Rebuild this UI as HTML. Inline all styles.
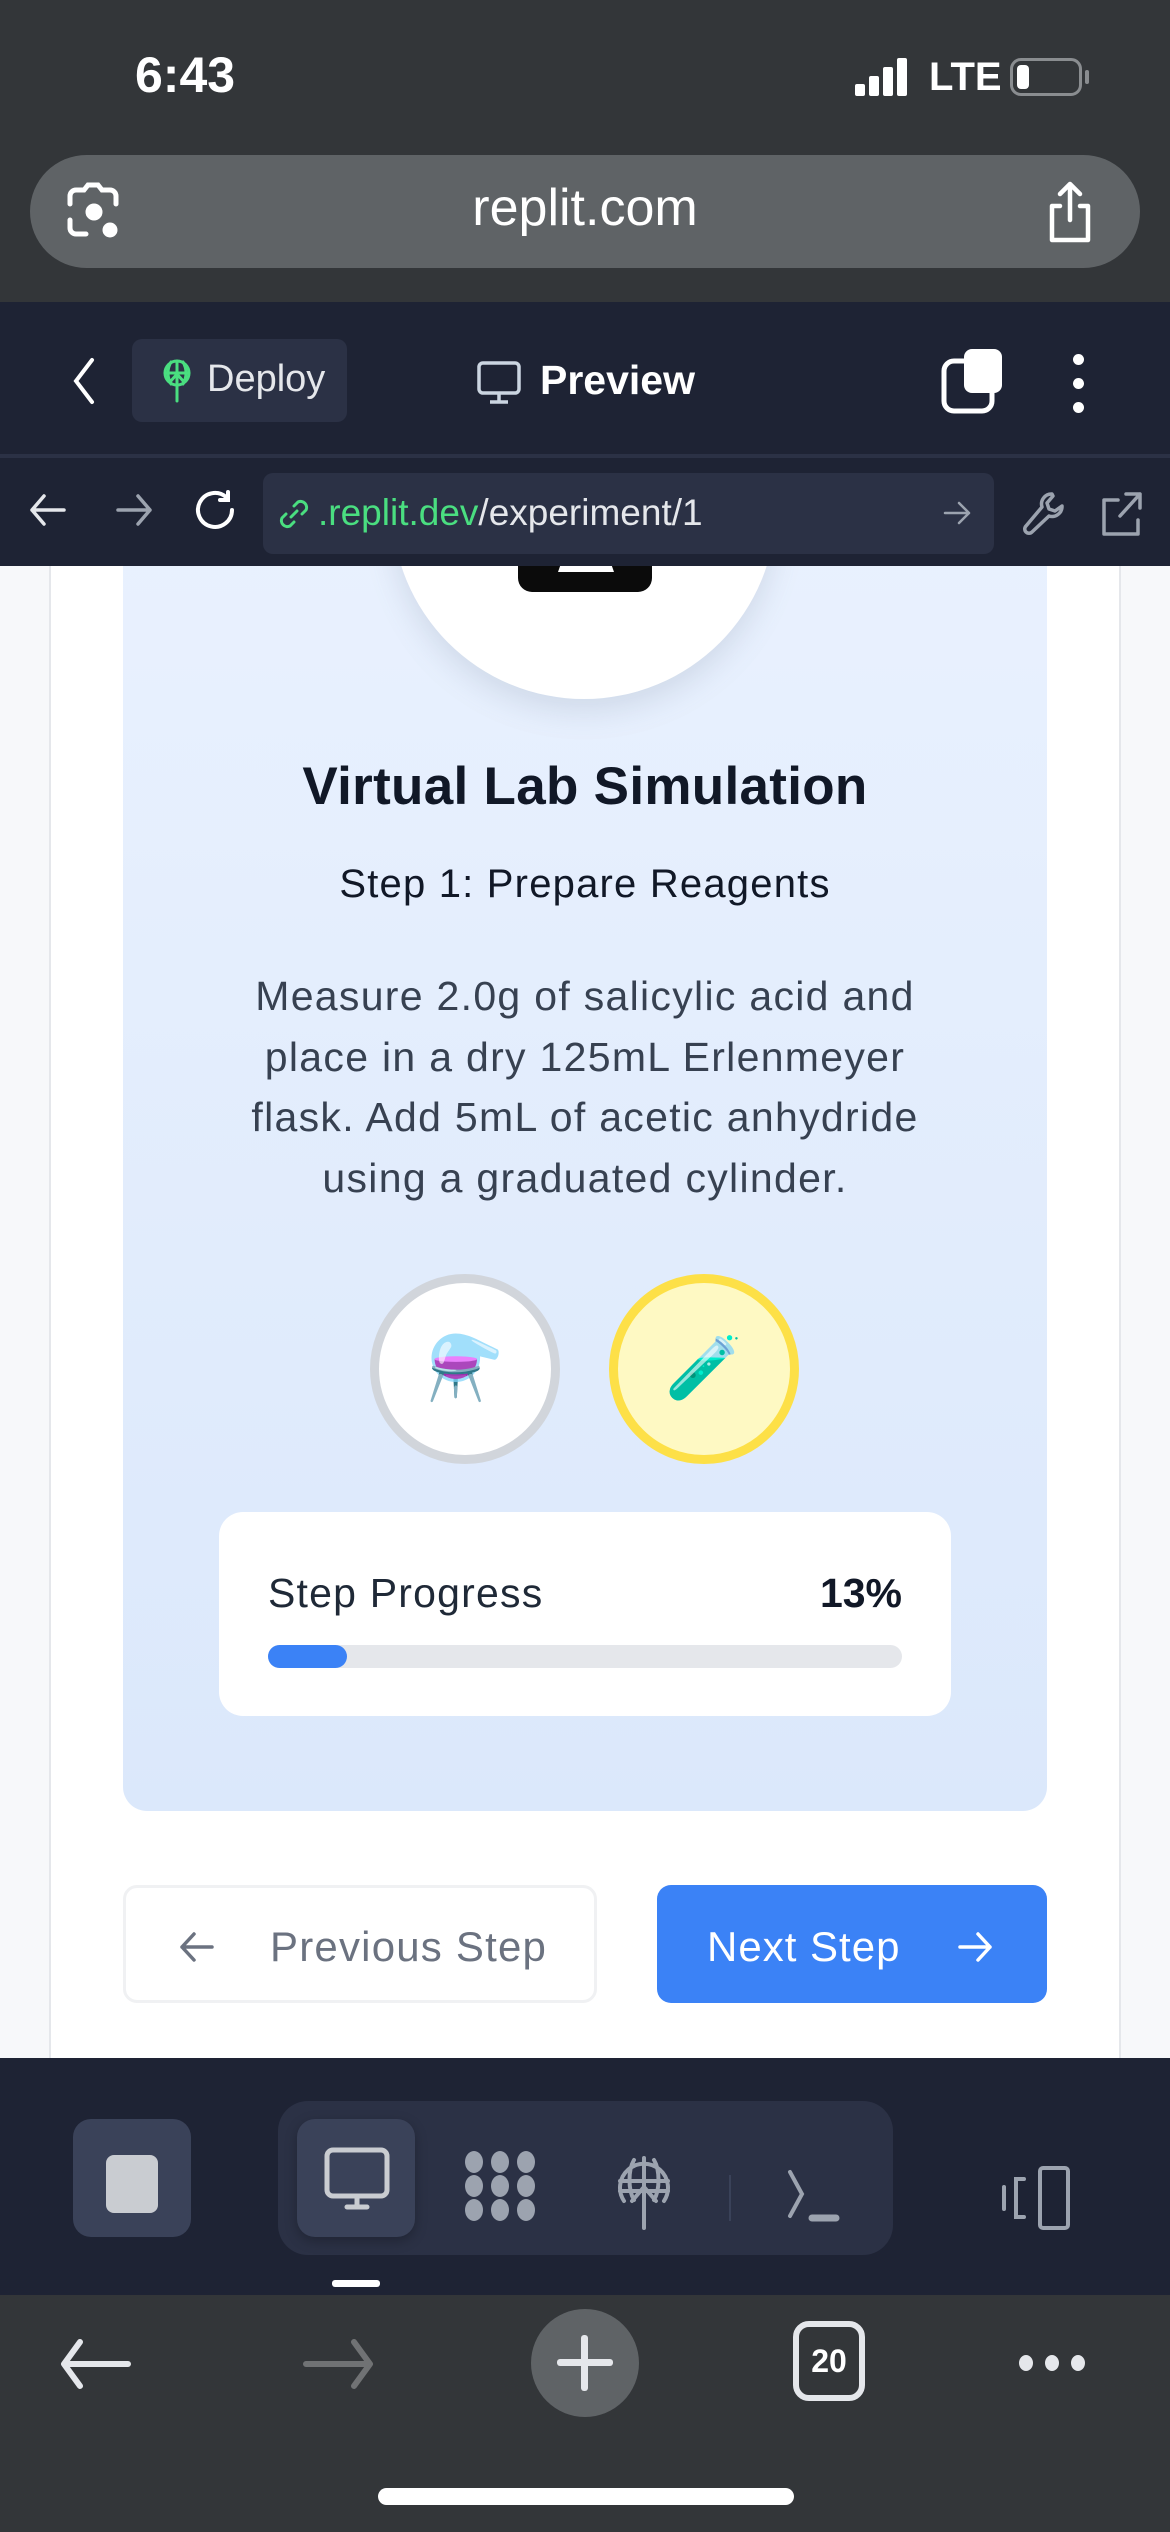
<!DOCTYPE html>
<html><head><meta charset="utf-8"><style>
*{margin:0;padding:0;box-sizing:border-box}
body{width:1170px;height:2532px;position:relative;overflow:hidden;font-family:"Liberation Sans",sans-serif;background:#f7f8fa}
.a{position:absolute}
.c{text-align:center;white-space:nowrap}
</style></head><body>
<div class="a" style="left:0;top:0;width:1170px;height:302px;background:#333639"></div>
<div class="a" style="left:135px;top:46px;font-size:50px;font-weight:bold;color:#fff">6:43</div>
<div class="a" style="left:855px;top:58px;width:60px;height:38px">
 <div class="a" style="left:0;top:26px;width:10px;height:12px;background:#fff;border-radius:2px"></div>
 <div class="a" style="left:14px;top:18px;width:10px;height:20px;background:#fff;border-radius:2px"></div>
 <div class="a" style="left:28px;top:9px;width:10px;height:29px;background:#fff;border-radius:2px"></div>
 <div class="a" style="left:42px;top:0;width:10px;height:38px;background:#fff;border-radius:2px"></div>
</div>
<div class="a" style="left:929px;top:55px;font-size:40px;font-weight:bold;color:#fff">LTE</div>
<div class="a" style="left:1010px;top:58px;width:72px;height:38px;border:3px solid #8a8d90;border-radius:11px"><div class="a" style="left:4px;top:4px;width:12px;height:24px;background:#fff;border-radius:4px"></div></div>
<div class="a" style="left:1085px;top:70px;width:4px;height:14px;background:#8a8d90;border-radius:2px"></div>
<div class="a" style="left:30px;top:155px;width:1110px;height:113px;background:#5f6366;border-radius:57px"></div>
<svg class="a" style="left:64px;top:182px" width="60" height="60" viewBox="0 0 60 60" fill="none" stroke="#fff" stroke-width="5" stroke-linecap="round"><path d="M6 22V14a6 6 0 0 1 6-6h8l4-5h10l4 5h8a6 6 0 0 1 6 6v8M6 38v8a6 6 0 0 0 6 6h10"/><circle cx="30" cy="30" r="6" fill="#fff"/><circle cx="46" cy="48" r="5" fill="#fff"/></svg>
<div class="a c" style="left:0;width:1170px;top:178px;font-size:52px;color:#fff">replit.com</div>
<svg class="a" style="left:1040px;top:180px" width="60" height="64" viewBox="0 0 60 64" fill="none" stroke="#fff" stroke-width="4.5" stroke-linecap="round" stroke-linejoin="round"><path d="M30 4v36M20 14l10-10 10 10M20 26h-8v34h36V26h-8"/></svg>
<div class="a" style="left:0;top:302px;width:1170px;height:264px;background:#1e2334"></div>
<div class="a" style="left:0;top:454px;width:1170px;height:4px;background:#2b3145"></div>
<svg class="a" style="left:68px;top:356px" width="30" height="50" viewBox="0 0 30 50" fill="none" stroke="#fff" stroke-width="4" stroke-linecap="round"><path d="M24 4L8 25l16 21"/></svg>
<div class="a" style="left:132px;top:339px;width:215px;height:83px;background:#2b3145;border-radius:10px"></div>
<svg class="a" style="left:160px;top:358px" width="34" height="46" viewBox="0 0 34 46" fill="none" stroke="#4ade80" stroke-width="3" stroke-linecap="round"><circle cx="17" cy="15" r="12"/><path d="M5 15h24M17 3v40M11 4c-4 7-4 15 0 22M23 4c4 7 4 15 0 22M10 24l7-8 7 8"/></svg>
<div class="a" style="left:207px;top:358px;font-size:38px;color:#e5e7eb">Deploy</div>
<svg class="a" style="left:476px;top:360px" width="46" height="46" viewBox="0 0 46 46" fill="none" stroke="#cbd5e1" stroke-width="3.5" stroke-linejoin="round"><rect x="3" y="3" width="40" height="30" rx="4"/><path d="M23 33v9M14 42h18"/></svg>
<div class="a" style="left:540px;top:357px;font-size:41px;font-weight:bold;color:#fff">Preview</div>
<svg class="a" style="left:940px;top:347px" width="66" height="68" viewBox="0 0 66 68" fill="none"><rect x="4" y="14" width="48" height="50" rx="10" stroke="#fff" stroke-width="5"/><rect x="24" y="2" width="38" height="44" rx="8" fill="#fff"/></svg>
<div class="a" style="left:1073px;top:354px;width:11px;height:11px;border-radius:50%;background:#fff"></div>
<div class="a" style="left:1073px;top:378px;width:11px;height:11px;border-radius:50%;background:#fff"></div>
<div class="a" style="left:1073px;top:402px;width:11px;height:11px;border-radius:50%;background:#fff"></div>
<svg class="a" style="left:28px;top:492px" width="40" height="36" viewBox="0 0 40 36" fill="none" stroke="#e5e7eb" stroke-width="3.5" stroke-linecap="round" stroke-linejoin="round"><path d="M36 18H4M16 4L4 18l12 14"/></svg>
<svg class="a" style="left:114px;top:492px" width="40" height="36" viewBox="0 0 40 36" fill="none" stroke="#9ca3af" stroke-width="3.5" stroke-linecap="round" stroke-linejoin="round"><path d="M4 18h32M24 4l12 14-12 14"/></svg>
<svg class="a" style="left:194px;top:490px" width="46" height="44" viewBox="0 0 46 44" fill="none" stroke="#fff" stroke-width="4" stroke-linecap="round"><path d="M38 20a17 17 0 1 1-6-13M34 2v8h-8"/></svg>
<div class="a" style="left:263px;top:473px;width:731px;height:81px;background:#2b3145;border-radius:10px"></div>
<svg class="a" style="left:276px;top:496px" width="36" height="36" viewBox="0 0 36 36" fill="none" stroke="#4ade80" stroke-width="3" stroke-linecap="round"><path d="M15 21l6-6M18 10l4-4a6 6 0 0 1 8 8l-4 4M18 26l-4 4a6 6 0 0 1-8-8l4-4"/></svg>
<div class="a" style="left:318px;top:492px;font-size:37px;color:#e5e7eb;white-space:nowrap"><span style="color:#4ade80">.replit.dev</span>/experiment/1</div>
<svg class="a" style="left:942px;top:498px" width="30" height="30" viewBox="0 0 30 30" fill="none" stroke="#9ca3af" stroke-width="2.5" stroke-linecap="round" stroke-linejoin="round"><path d="M3 15h24M17 5l10 10-10 10"/></svg>
<svg class="a" style="left:1022px;top:490px" width="44" height="48" viewBox="0 0 44 48" fill="none" stroke="#9ca3af" stroke-width="3.5" stroke-linejoin="round"><path d="M30 4a10 10 0 0 0-10 13L4 36a4 4 0 0 0 6 6l17-16a10 10 0 0 0 13-10l-7 5-6-2-2-6 6-7z"/></svg>
<svg class="a" style="left:1100px;top:490px" width="44" height="48" viewBox="0 0 44 48" fill="none" stroke="#9ca3af" stroke-width="3.5" stroke-linecap="round" stroke-linejoin="round"><path d="M18 10H4v34h34V30M26 4h14v14M40 4L20 26"/></svg>
<div class="a" style="left:0;top:566px;width:1170px;height:1492px;background:#f7f8fa;overflow:hidden">
 <div class="a" style="left:49px;top:-20px;width:1072px;height:1540px;background:#fff;border:2px solid #e5e7eb;border-top:none"></div>
 <div class="a" style="left:123px;top:-40px;width:924px;height:1285px;background:linear-gradient(#e9f1fe,#dbe8fb);border-radius:24px"></div>
 <div class="a" style="left:392px;top:-251px;width:384px;height:384px;border-radius:50%;background:#fff;box-shadow:0 12px 30px rgba(100,116,139,.18)"></div>
 <div class="a" style="left:518px;top:-10px;width:134px;height:36px;background:#0b0b0b;border-radius:0 0 14px 14px"></div>
 <div class="a" style="left:558px;top:-10px;width:56px;height:16px;background:#fff;clip-path:polygon(10% 0,90% 0,100% 100%,0 100%)"></div>
 <div class="a c" style="left:0;width:1170px;top:190px;font-size:53px;font-weight:bold;color:#111827;letter-spacing:0.3px">Virtual Lab Simulation</div>
 <div class="a c" style="left:0;width:1170px;top:296px;font-size:40px;color:#111827;letter-spacing:1.2px">Step 1: Prepare Reagents</div>
 <div class="a c" style="left:0;width:1170px;top:400px;font-size:41px;line-height:60.5px;color:#374151;letter-spacing:1.3px">Measure 2.0g of salicylic acid and<br>place in a dry 125mL Erlenmeyer<br>flask. Add 5mL of acetic anhydride<br>using a graduated cylinder.</div>
 <div class="a" style="left:370px;top:708px;width:190px;height:190px;border-radius:50%;background:#fff;border:9px solid #d1d5db;font-size:62px;line-height:172px;text-align:center">⚗️</div>
 <div class="a" style="left:609px;top:708px;width:190px;height:190px;border-radius:50%;background:#fef9c3;border:9px solid #fde047;font-size:62px;line-height:172px;text-align:center">🧪</div>
 <div class="a" style="left:219px;top:946px;width:732px;height:204px;background:#fff;border-radius:24px"></div>
 <div class="a" style="left:268px;top:1004px;font-size:41px;color:#1f2937;letter-spacing:1.2px">Step Progress</div>
 <div class="a" style="left:780px;top:1004px;width:122px;text-align:right;font-size:41px;font-weight:bold;color:#111827">13%</div>
 <div class="a" style="left:268px;top:1079px;width:634px;height:23px;background:#e5e7eb;border-radius:12px"></div>
 <div class="a" style="left:268px;top:1079px;width:79px;height:23px;background:#3b82f6;border-radius:12px"></div>
 <div class="a" style="left:123px;top:1319px;width:474px;height:118px;background:#fff;border:3px solid #f0f1f3;border-radius:14px"></div>
 <svg class="a" style="left:178px;top:1363px" width="38" height="36" viewBox="0 0 38 36" fill="none" stroke="#6b7280" stroke-width="3.5" stroke-linecap="round" stroke-linejoin="round"><path d="M34 18H4M16 5L4 18l12 13"/></svg>
 <div class="a" style="left:270px;top:1357px;font-size:42px;color:#6b7280;letter-spacing:1.2px">Previous Step</div>
 <div class="a" style="left:657px;top:1319px;width:390px;height:118px;background:#3b82f6;border-radius:14px"></div>
 <div class="a" style="left:707px;top:1357px;font-size:42px;color:#fff;letter-spacing:1px">Next Step</div>
 <svg class="a" style="left:956px;top:1363px" width="38" height="36" viewBox="0 0 38 36" fill="none" stroke="#fff" stroke-width="3.5" stroke-linecap="round" stroke-linejoin="round"><path d="M4 18h30M22 5l12 13-12 13"/></svg>
</div>
<div class="a" style="left:0;top:2058px;width:1170px;height:237px;background:#1e2334"></div>
<div class="a" style="left:73px;top:2119px;width:118px;height:118px;background:#3a4259;border-radius:18px"></div>
<div class="a" style="left:106px;top:2155px;width:52px;height:58px;background:#c9ccd1;border-radius:8px"></div>
<div class="a" style="left:278px;top:2101px;width:615px;height:154px;background:#2b3145;border-radius:30px"></div>
<div class="a" style="left:297px;top:2119px;width:118px;height:118px;background:#3a4259;border-radius:18px;box-shadow:0 4px 12px rgba(0,0,0,.25)"></div>
<svg class="a" style="left:322px;top:2146px" width="70" height="66" viewBox="0 0 70 66" fill="none" stroke="#c9ccd1" stroke-width="5" stroke-linecap="round"><rect x="5" y="4" width="60" height="46" rx="6"/><path d="M35 50v10M25 61h20"/></svg>
<svg class="a" style="left:462px;top:2149px" width="76" height="74" viewBox="0 0 76 74" fill="#9ca3af"><ellipse cx="12" cy="13" rx="9" ry="11"/><ellipse cx="38" cy="13" rx="9" ry="11"/><ellipse cx="64" cy="13" rx="9" ry="11"/><ellipse cx="12" cy="37" rx="9" ry="11"/><ellipse cx="38" cy="37" rx="9" ry="11"/><ellipse cx="64" cy="37" rx="9" ry="11"/><ellipse cx="12" cy="61" rx="9" ry="11"/><ellipse cx="38" cy="61" rx="9" ry="11"/><ellipse cx="64" cy="61" rx="9" ry="11"/></svg>
<svg class="a" style="left:614px;top:2155px" width="60" height="76" viewBox="0 0 60 76" fill="none" stroke="#9ca3af" stroke-width="4" stroke-linecap="round"><path d="M10 46A24 24 0 1 1 50 46"/><path d="M6 26h48M6 36h48M30 3v70M20 5c-6 10-6 30 0 40M40 5c6 10 6 30 0 40M18 46l12-14 12 14"/></svg>
<div class="a" style="left:729px;top:2175px;width:2px;height:46px;background:#3a4259"></div>
<svg class="a" style="left:786px;top:2168px" width="56" height="56" viewBox="0 0 56 56" fill="none" stroke="#9ca3af" stroke-width="4" stroke-linecap="round"><path d="M4 4l12 22L4 48"/><path d="M26 50h24" stroke-width="7"/></svg>
<svg class="a" style="left:1000px;top:2163px" width="76" height="70" viewBox="0 0 76 70" fill="none" stroke="#9ca3af" stroke-width="4" stroke-linecap="round"><rect x="40" y="5" width="28" height="60" rx="3"/><path d="M24 16h-8v38h8M4 24v22"/></svg>
<div class="a" style="left:332px;top:2280px;width:48px;height:7px;background:#fff;border-radius:3px"></div>
<div class="a" style="left:0;top:2295px;width:1170px;height:237px;background:#333639"></div>
<svg class="a" style="left:58px;top:2338px" width="74" height="52" viewBox="0 0 74 52" fill="none" stroke="#e5e7eb" stroke-width="6" stroke-linecap="round" stroke-linejoin="round"><path d="M70 26H6M22 4L6 26l16 22"/></svg>
<svg class="a" style="left:302px;top:2338px" width="74" height="52" viewBox="0 0 74 52" fill="none" stroke="#707274" stroke-width="6" stroke-linecap="round" stroke-linejoin="round"><path d="M4 26h64M52 4l16 22-16 22"/></svg>
<div class="a" style="left:531px;top:2309px;width:108px;height:108px;border-radius:50%;background:#5f6366"></div>
<div class="a" style="left:557px;top:2359px;width:56px;height:7px;background:#e5e7eb;border-radius:3px"></div>
<div class="a" style="left:581px;top:2335px;width:7px;height:56px;background:#e5e7eb;border-radius:3px"></div>
<div class="a" style="left:793px;top:2321px;width:72px;height:80px;border:6px solid #e5e7eb;border-radius:16px;color:#fff;font-size:32px;font-weight:bold;text-align:center;line-height:68px">20</div>
<div class="a" style="left:1019px;top:2355px;width:14px;height:16px;border-radius:50%;background:#e5e7eb"></div>
<div class="a" style="left:1045px;top:2355px;width:14px;height:16px;border-radius:50%;background:#e5e7eb"></div>
<div class="a" style="left:1071px;top:2355px;width:14px;height:16px;border-radius:50%;background:#e5e7eb"></div>
<div class="a" style="left:378px;top:2488px;width:416px;height:17px;background:#fff;border-radius:9px"></div>
</body></html>
